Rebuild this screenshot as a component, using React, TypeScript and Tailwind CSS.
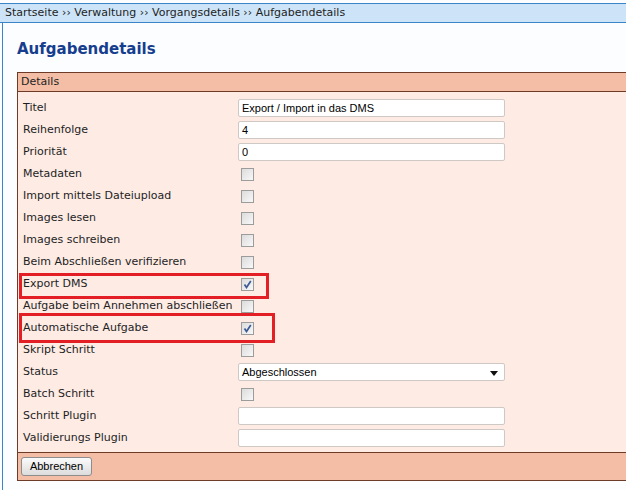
import React from 'react';

const rows: { label: string; kind: 'text' | 'check' | 'select'; value?: string; checked?: boolean }[] = [
  { label: 'Titel', kind: 'text', value: 'Export / Import in das DMS' },
  { label: 'Reihenfolge', kind: 'text', value: '4' },
  { label: 'Priorität', kind: 'text', value: '0' },
  { label: 'Metadaten', kind: 'check' },
  { label: 'Import mittels Dateiupload', kind: 'check' },
  { label: 'Images lesen', kind: 'check' },
  { label: 'Images schreiben', kind: 'check' },
  { label: 'Beim Abschließen verifizieren', kind: 'check' },
  { label: 'Export DMS', kind: 'check', checked: true },
  { label: 'Aufgabe beim Annehmen abschließen', kind: 'check' },
  { label: 'Automatische Aufgabe', kind: 'check', checked: true },
  { label: 'Skript Schritt', kind: 'check' },
  { label: 'Status', kind: 'select', value: 'Abgeschlossen' },
  { label: 'Batch Schritt', kind: 'check' },
  { label: 'Schritt Plugin', kind: 'text', value: '' },
  { label: 'Validierungs Plugin', kind: 'text', value: '' },
];

function Checkbox({ checked }: { checked?: boolean }) {
  return (
    <span className="ml-[3px] flex h-[13px] w-[13px] items-center justify-center border border-[#9c9c9c] bg-gradient-to-br from-[#dcdcdc] to-[#f8f8f8]">
      {checked && (
        <svg width="9" height="9" viewBox="0 0 9 9">
          <path d="M1.5 4.5 L3.5 7.5 L7.8 1" fill="none" stroke="#3c5a96" strokeWidth="1.7" />
        </svg>
      )}
    </span>
  );
}

function Field({ row }: { row: (typeof rows)[number] }) {
  if (row.kind === 'check') return <Checkbox checked={row.checked} />;
  return (
    <div className="flex h-[18px] w-[267px] items-center justify-between rounded-[2px] border border-[#cfc9c6] bg-white px-[3px] font-['Liberation_Sans',Arial,sans-serif] text-[11px] text-black">
      <span>{row.value}</span>
      {row.kind === 'select' && (
        <svg width="8" height="5" viewBox="0 0 8 5" className="mr-[3px] mt-[3px]">
          <path d="M0 0 H8 L4 5 Z" fill="#111" />
        </svg>
      )}
    </div>
  );
}

export default function App() {
  return (
    <div className="h-[490px] w-[626px] overflow-hidden bg-[#fbfdff] font-['DejaVu_Sans',Verdana,sans-serif] text-[11px] text-[#222]">
      <div className="mt-[3px] flex h-[20px] items-center border-y border-[#3a84c8] bg-[#cde4f8] pl-[5px] text-[11px] text-[#1e1e1e]">
        Startseite &rsaquo;&rsaquo; Verwaltung &rsaquo;&rsaquo; Vorgangsdetails &rsaquo;&rsaquo; Aufgabendetails
      </div>
      <div className="ml-[2px] h-[467px] border-l border-[#3a84c8] pl-[14px]">
        <h1 className="pt-[16px] text-[15px] font-bold leading-[20px] text-[#163d8e]">Aufgabendetails</h1>
        <div className="relative mt-[13px] w-[640px] border border-[#6e3b28]">
          <div className="flex h-[19px] items-center border-b border-[#6e3b28] bg-[#f4bea6] pl-[3px] pt-[1px] text-[#1e1e1e]">Details</div>
          <div className="bg-[#fdebe4] pb-[3px] pt-[5px]">
            {rows.map((row) => (
              <div key={row.label} className="flex h-[22px] items-center">
                <div className="w-[220px] pl-[5px] pt-[1px] text-[#1e1e1e]">{row.label}</div>
                <Field row={row} />
              </div>
            ))}
          </div>
          <div className="flex h-[28px] items-center border-t border-[#6e3b28] bg-[#f4bea6] pl-[3px]">
            <button className="h-[19px] w-[71px] rounded-[3px] border border-[#8d8d8d] bg-gradient-to-b from-[#fbfbfb] to-[#dcdcdc] font-['Liberation_Sans',Arial,sans-serif] text-[11px] text-black">
              Abbrechen
            </button>
          </div>
          <div className="absolute left-[1px] top-[200px] h-[26px] w-[250px] border-[3px] border-[#e31e24]" />
          <div className="absolute left-[1px] top-[240px] h-[30px] w-[256px] border-[3px] border-[#e31e24]" />
        </div>
      </div>
    </div>
  );
}
